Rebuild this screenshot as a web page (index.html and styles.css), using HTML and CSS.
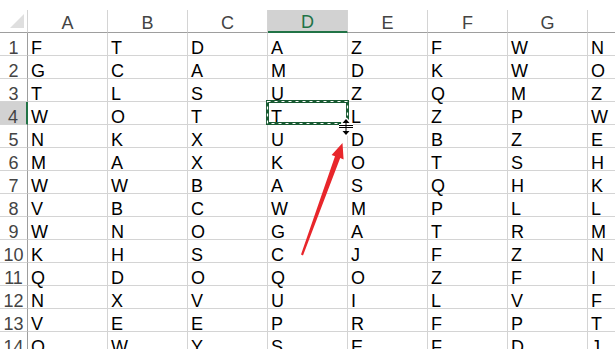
FILE: index.html
```html
<!DOCTYPE html>
<html lang="en">
<head>
    <meta charset="UTF-8">
    <meta name="viewport" content="width=device-width, initial-scale=1.0">
    <title>Sheet1</title>
    <link rel="stylesheet" href="styles.css">
</head>
<body>
    <div class="sheet">
        <div class="row head">
            <div class="corner"><span class="tri"></span></div>
            <div class="col">A</div>
            <div class="col">B</div>
            <div class="col">C</div>
            <div class="col active">D</div>
            <div class="col">E</div>
            <div class="col">F</div>
            <div class="col">G</div>
            <div class="col">H</div>
        </div>
        <div id="rows"></div>

        <svg class="overlay" width="615" height="349" viewBox="0 0 615 349">
            <!-- copy marquee on D4 -->
            <rect x="267.5" y="101.5" width="80" height="22" fill="none" stroke="#185a32" stroke-width="3"/>
            <rect x="267.5" y="101.5" width="80" height="22" fill="none" stroke="#fff" stroke-width="1.2" stroke-dasharray="3 4"/>
            <!-- row resize cursor -->
            <g stroke="#fff" stroke-width="3" fill="#fff" stroke-linejoin="round">
                <path d="M346 119 L342.5 123 L349.5 123 Z M346 135 L342.5 131 L349.5 131 Z"/>
                <path d="M346 122 V132 M339 125.5 H353 M339 127.5 H353"/>
            </g>
            <g stroke="#000" stroke-width="1" fill="#000">
                <path d="M346 119 L342.5 123 L349.5 123 Z M346 135 L342.5 131 L349.5 131 Z" stroke="none"/>
                <path d="M346 122 V132 M339 125.5 H353 M339 127.5 H353"/>
            </g>
            <!-- red arrow -->
            <polygon fill="#e8262b" points="342.5,143 343.6,159.4 340.2,158 303,255.4 301,254.6 335,156.2 331.6,155"/>
        </svg>
    </div>

    <script>
        const data = [
            'FTDAZFWN', 'GCAMDKWO', 'TLSUZQMZ', 'WOTTLZPW', 'NKXUDBZE',
            'MAXKOTSH', 'WWBASQHK', 'VBCWMPLL', 'WNOGATRM', 'KHSCJFZN',
            'QDOQOZFI', 'NXVUILVF', 'VEEPRFPT', 'OWYSEFDJ'
        ];
        const rows = document.getElementById('rows');

        data.forEach(function(line, i) {
            const row = document.createElement('div');
            row.className = 'row';

            const num = document.createElement('div');
            num.className = 'num' + (i === 3 ? ' active' : '');
            num.textContent = i + 1;
            row.appendChild(num);

            line.split('').forEach(function(ch) {
                const cell = document.createElement('div');
                cell.className = 'cell';
                cell.textContent = ch;
                row.appendChild(cell);
            });

            rows.appendChild(row);
        });
    </script>
</body>
</html>
```

FILE: styles.css
```css
body {
    margin: 0;
    padding: 10px 0 0;
    background: #fff;
    font-family: "Liberation Sans", Arial, sans-serif;
    font-size: 18px;
    color: #000;
    overflow: hidden;
}

.sheet {
    width: 615px;
    height: 339px;
    overflow: hidden;
}

.row {
    display: grid;
    grid-template-columns: 28px repeat(8, 80px);
    height: 23px;
}

.row > div {
    box-sizing: border-box;
    border-right: 1px solid #d4d4d4;
    border-bottom: 1px solid #d4d4d4;
    display: flex;
    align-items: flex-end;
    line-height: 14px;
    white-space: nowrap;
}

.head > div {
    border-bottom-color: #9e9e9e;
    justify-content: center;
    color: #444;
    line-height: 18px;
}

.head .col.active {
    background: #d2d2d2;
    border-bottom: 2px solid #217346;
    color: #217346;
}

.corner {
    position: relative;
}

.tri {
    position: absolute;
    right: 3px;
    bottom: 4px;
    width: 0;
    height: 0;
    border-left: 14px solid transparent;
    border-bottom: 14px solid #dfdfdf;
}

.row > .num {
    justify-content: center;
    color: #444;
    border-right-color: #9e9e9e;
}

.row > .num.active {
    background: #d2d2d2;
    border-right: 2px solid #217346;
}

.cell {
    padding-left: 3px;
}

.overlay {
    position: absolute;
    left: 0;
    top: 0;
    pointer-events: none;
}
```
